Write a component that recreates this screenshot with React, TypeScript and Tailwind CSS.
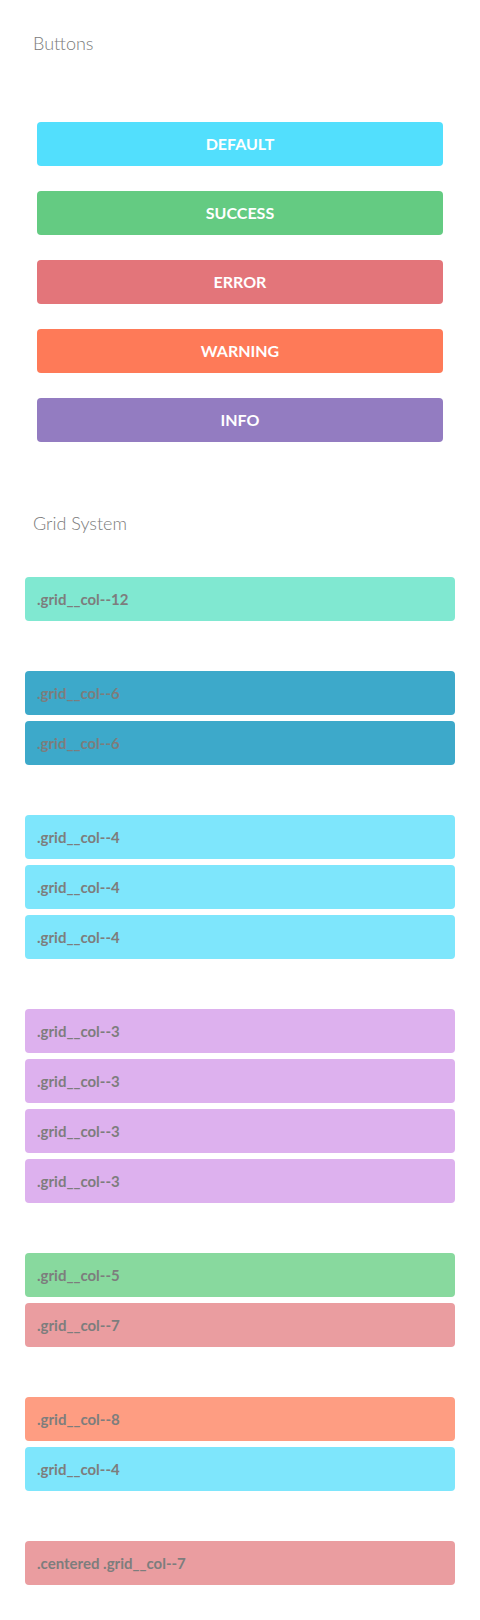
import React from 'react';

const buttons = [
  { label: 'DEFAULT', bg: 'bg-[#52dffd]' },
  { label: 'SUCCESS', bg: 'bg-[#64cb82]' },
  { label: 'ERROR', bg: 'bg-[#e3757a]' },
  { label: 'WARNING', bg: 'bg-[#fe7a58]' },
  { label: 'INFO', bg: 'bg-[#937cc1]' },
];

// each group is a row of the demo grid, stacked on small screens
const gridGroups: { label: string; bg: string }[][] = [
  [{ label: '.grid__col--12', bg: 'bg-[#80e8d1]' }],
  [
    { label: '.grid__col--6', bg: 'bg-[#3da9ca]' },
    { label: '.grid__col--6', bg: 'bg-[#3da9ca]' },
  ],
  [
    { label: '.grid__col--4', bg: 'bg-[#7ee6fc]' },
    { label: '.grid__col--4', bg: 'bg-[#7ee6fc]' },
    { label: '.grid__col--4', bg: 'bg-[#7ee6fc]' },
  ],
  [
    { label: '.grid__col--3', bg: 'bg-[#ddb1ee]' },
    { label: '.grid__col--3', bg: 'bg-[#ddb1ee]' },
    { label: '.grid__col--3', bg: 'bg-[#ddb1ee]' },
    { label: '.grid__col--3', bg: 'bg-[#ddb1ee]' },
  ],
  [
    { label: '.grid__col--5', bg: 'bg-[#88d99e]' },
    { label: '.grid__col--7', bg: 'bg-[#ea9da0]' },
  ],
  [
    { label: '.grid__col--8', bg: 'bg-[#fe9d82]' },
    { label: '.grid__col--4', bg: 'bg-[#7ee6fc]' },
  ],
  [{ label: '.centered .grid__col--7', bg: 'bg-[#ea9da0]' }],
];

const SectionTitle: React.FC<{ children: React.ReactNode }> = ({ children }) => (
  <h2 className="ml-[33px] text-[18px] leading-[22px] font-light text-[#7b7b7b]">{children}</h2>
);

export default function App() {
  return (
    <div className="min-h-screen bg-white pt-[32px] pb-[37px] font-['Lato','Liberation_Sans',sans-serif]">
      {/* Buttons */}
      <SectionTitle>Buttons</SectionTitle>
      <div className="mt-[68px] px-[37px] flex flex-col gap-[25px]">
        {buttons.map((b) => (
          <button
            key={b.label}
            className={`h-[44px] w-full rounded ${b.bg} text-white text-[16px] font-bold flex items-center justify-center`}
          >
            {b.label}
          </button>
        ))}
      </div>

      {/* Grid System */}
      <div className="mt-[70px]">
        <SectionTitle>Grid System</SectionTitle>
      </div>
      <div className="mt-[43px] px-[25px] flex flex-col gap-[50px]">
        {gridGroups.map((group, i) => (
          <div key={i} className="flex flex-col gap-[6px]">
            {group.map((col, j) => (
              <div
                key={j}
                className={`h-[44px] rounded ${col.bg} pl-[12px] flex items-center text-[15px] font-bold text-[#7d7d7d]`}
              >
                {col.label}
              </div>
            ))}
          </div>
        ))}
      </div>
    </div>
  );
}
